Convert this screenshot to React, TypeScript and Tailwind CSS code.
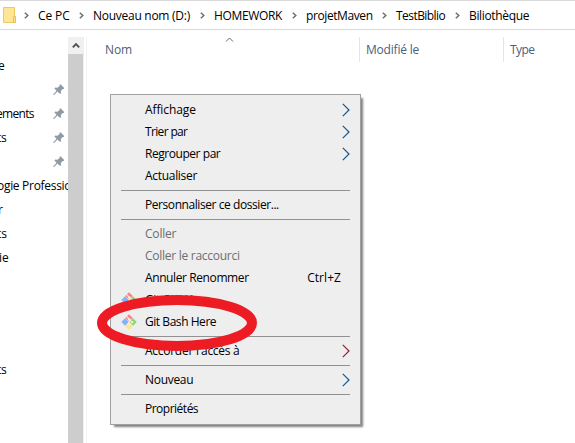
import React from "react";

function Crumb({ label, className }: { label: string; className: string }) {
  return (
    <div className="flex items-center">
      <svg width="5" height="7" viewBox="0 0 5 7" className="shrink-0">
        <path d="M0.8 0.7L3.8 3.5L0.8 6.3" fill="none" stroke="#6e6e6e" strokeWidth="1.5" />
      </svg>
      <span className={`ml-[9px] pt-0.5 whitespace-pre ${className}`}>{label}</span>
    </div>
  );
}

function Pin() {
  return (
    <svg width="12" height="12" viewBox="0 0 12 12" className="mr-[3px] ml-auto shrink-0">
      <path d="M6.6 0.6L7.5 0.2L11.2 3.9L10.8 5L9.7 4.9L7.8 7L8 9.2L7 10L4.5 7.6L1 11H0.3V10.3L3.6 6.7L1.4 4.4L2.3 3.5L4.5 3.7L6.7 1.7Z" fill="#8f9ba4" />
    </svg>
  );
}

function SideRow({ label, pin, className = "" }: { label?: string; pin?: boolean; className?: string }) {
  return (
    <div className="flex h-6 w-[68px] items-center overflow-hidden">
      <span className={`whitespace-pre ${className}`}>{label}</span>
      {pin && <Pin />}
    </div>
  );
}

function GitIcon() {
  return (
    <svg width="16" height="16" viewBox="0 0 16 16">
      <path d="M8 0.3L11.8 4L8 7.8L4.2 4Z" fill="#ff8080" />
      <path d="M4 4.2L7.7 8L4 11.8L0.3 8Z" fill="#80b3ff" />
      <path d="M12 4.2L15.7 8L12 11.8L8.3 8Z" fill="#8bd66b" />
      <path d="M8 8.2L11.8 12L8 15.7L4.2 12Z" fill="#ffe680" />
      <path d="M5.4 2.3L8.3 5.3V10.8M8.4 5.4L11.2 8.2" fill="none" stroke="#eee" strokeWidth="1.1" />
      <circle cx="8.3" cy="5.4" r="1.2" fill="#eee" />
      <circle cx="8.3" cy="10.6" r="1.2" fill="#eee" />
      <circle cx="11.2" cy="8.2" r="1.2" fill="#eee" />
    </svg>
  );
}

type ItemProps = {
  label: string;
  className?: string;
  arrow?: string;
  shortcut?: string;
  git?: boolean;
};

function Item({ label, className = "", arrow, shortcut, git }: ItemProps) {
  return (
    <div className="flex h-[22px] items-center">
      <div className="flex w-[34px] shrink-0 pl-[10px]">{git && <GitIcon />}</div>
      <span className={`whitespace-pre ${className}`}>{label}</span>
      {shortcut && <span className="mr-[19px] ml-auto tracking-[0.05px]">{shortcut}</span>}
      {arrow && (
        <svg width="8" height="14" viewBox="0 0 8 14" className="mr-[10px] ml-auto">
          <path d="M0.8 0.8L7 7L0.8 13.2" fill="none" stroke={arrow} strokeWidth="1.2" />
        </svg>
      )}
    </div>
  );
}

function Separator() {
  return <div className="mr-[10px] ml-[10px] h-[7px] pt-[3px]"><div className="h-px bg-[#919191]" /></div>;
}

export default function App() {
  return (
    <div className="relative flex h-[443px] w-[575px] flex-col overflow-hidden bg-white font-['Open_Sans',sans-serif] text-[12px] leading-4 text-black">
      <div className="flex h-[30px] shrink-0 items-center border-y border-[#d9d9d9] pl-[3px]">
        <svg width="13" height="16" viewBox="0 0 13 16" className="mr-[8px]">
          <path d="M0.5 0.5H11.5V15.5H0.5Z" fill="#ffe596" stroke="#edca5c" />
          <path d="M10.5 9.5H12.5V15.5H10.5Z" fill="#ffe596" stroke="#e8c04c" />
        </svg>
        <div className="flex">
          <div className="w-[55px]"><Crumb label="Ce PC" className="tracking-[-0.1px]" /></div>
          <div className="w-[121px]"><Crumb label="Nouveau nom (D:)" className="tracking-[-0.27px]" /></div>
          <div className="w-[92px]"><Crumb label="HOMEWORK" className="tracking-[-0.35px]" /></div>
          <div className="w-[90px]"><Crumb label="projetMaven" className="tracking-[-0.4px]" /></div>
          <div className="w-[73px]"><Crumb label="TestBiblio" className="tracking-[-0.55px]" /></div>
          <Crumb label="Biliothèque" className="tracking-[-0.35px]" />
        </div>
      </div>
      <div className="flex min-h-0 flex-1">
        <div className="w-[68px] shrink-0 overflow-hidden pt-[24px]">
          <SideRow label="e" className="-ml-[2px]" />
          <SideRow pin />
          <SideRow label="ements" pin className="-ml-[4px] tracking-[-0.7px]" />
          <SideRow label="ts" pin className="-ml-[3px] tracking-[-0.3px]" />
          <SideRow pin />
          <SideRow label="ogie Professionnel" className="-ml-[3px] tracking-[-0.3px]" />
          <SideRow label="r" className="-ml-[2px]" />
          <SideRow label="ts" className="-ml-[3px]" />
          <SideRow label="ie" className="-ml-[1px]" />
          <div className="h-[88px]" />
          <SideRow label="ts" className="-ml-[3px] tracking-[-0.3px]" />
        </div>
        <div className="mt-[7px] w-4 shrink-0 border-r border-[#f0f0f0] bg-[#cdcdcd]">
          <div className="flex h-[17px] w-4 items-center justify-center bg-[#f0f0f0]">
            <svg width="8" height="7" viewBox="0 0 8 7"><path d="M0.8 5.3L4 2L7.2 5.3" fill="none" stroke="#505050" strokeWidth="1.9" /></svg>
          </div>
        </div>
        <div className="mt-[7px] ml-[2px] w-px shrink-0 bg-[#f3f3f3]" />
        <div className="mt-[7px] flex h-[25px] flex-1 items-center text-[#4c607a]">
          <div className="flex h-full w-[273px] border-r border-[#e5e5e5] pl-[18px]">
            <span className="mt-[5px] w-[120px] tracking-[-0.1px]">Nom</span>
            <svg width="9" height="5" viewBox="0 0 9 5"><path d="M1 4.5L4.5 1L8 4.5" fill="none" stroke="#666" /></svg>
          </div>
          <div className="h-full w-36 border-r border-[#e5e5e5] pt-[5px] pl-[6px]"><span className="tracking-[-0.2px]">Modifié le</span></div>
          <div className="h-full pt-[5px] pl-[6px] tracking-[-0.6px]">Type</div>
        </div>
      </div>

      <div className="absolute top-[94px] left-[110px] h-[331px] w-[251px] border border-[#a0a0a0] bg-[#eee] py-1 shadow-[3px_3px_2px_-1px_rgba(0,0,0,0.5)]">
        <Item label="Affichage" arrow="#17568c" className="tracking-[-0.1px]" />
        <Item label="Trier par" arrow="#17568c" className="tracking-[-0.65px]" />
        <Item label="Regrouper par" arrow="#17568c" className="tracking-[-0.45px]" />
        <Item label="Actualiser" className="tracking-[-0.3px]" />
        <Separator />
        <Item label="Personnaliser ce dossier..." className="tracking-[-0.43px]" />
        <Separator />
        <Item label="Coller" className="tracking-[-0.2px] text-[#6d6d6d]" />
        <Item label="Coller le raccourci" className="tracking-[-0.27px] text-[#6d6d6d]" />
        <Item label="Annuler Renommer" shortcut="Ctrl+Z" className="tracking-[-0.4px]" />
        <Item label="Git GUI Here" git className="tracking-[-0.45px]" />
        <Item label="Git Bash Here" git className="tracking-[-0.45px]" />
        <Separator />
        <Item label="Accorder l'accès à" arrow="#8c2531" className="tracking-[-0.27px]" />
        <Separator />
        <Item label="Nouveau" arrow="#17568c" className="tracking-[-0.3px]" />
        <Separator />
        <Item label="Propriétés" className="tracking-[-0.5px]" />
      </div>
      <svg className="absolute top-[295px] left-[97px]" width="160" height="56" viewBox="0 0 160 56">
        <ellipse cx="80" cy="28" rx="75" ry="23" fill="none" stroke="#ed1c24" strokeWidth="10" />
      </svg>
    </div>
  );
}
